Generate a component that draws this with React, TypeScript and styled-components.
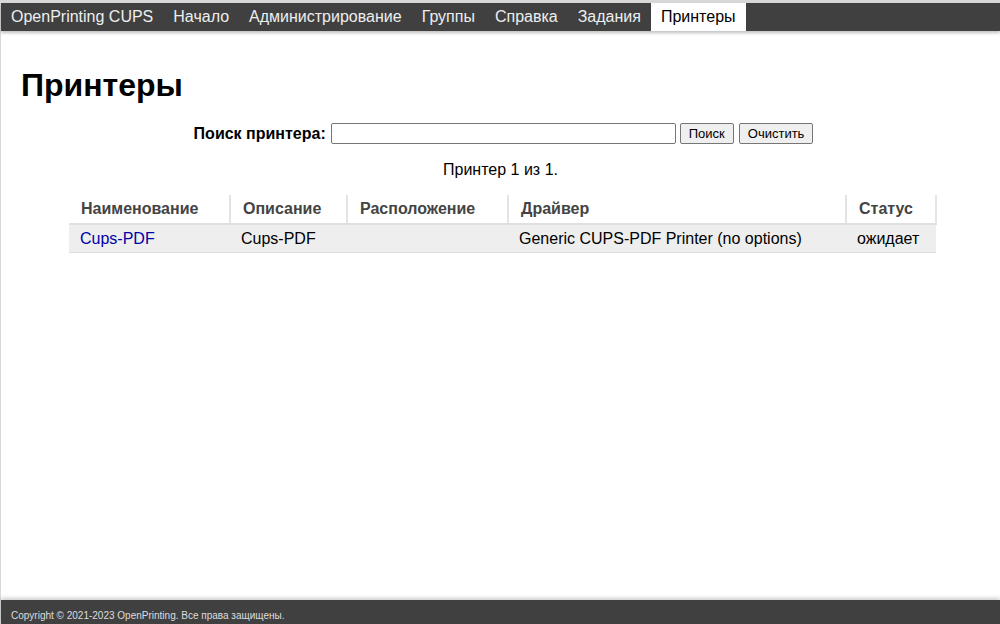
import styled, { createGlobalStyle } from "styled-components";

const GlobalStyle = createGlobalStyle`
  html, body {
    margin: 0;
    padding: 0;
    background: #d8d8d8;
  }
  body {
    font-family: "Liberation Sans", Arial, sans-serif;
    font-size: 16px;
    color: #000;
  }
`;

const Page = styled.div`
  display: flex;
  flex-direction: column;
  min-height: 621px;
  margin-top: 3px;
  margin-left: 1px;
  background: #fff;
`;

const Header = styled.nav`
  display: flex;
  height: 28px;
  background: #404040;
  box-shadow: 0 2px 3px rgba(0, 0, 0, 0.25);
`;

const NavItem = styled.a<{ $active?: boolean }>`
  display: flex;
  align-items: center;
  padding: 0 10px;
  font-size: 16px;
  text-decoration: none;
  color: ${(p) => (p.$active ? "#000" : "#eee")};
  background: ${(p) => (p.$active ? "#fff" : "transparent")};
`;

const Main = styled.main`
  flex: 1;
  padding: 0 20px;
`;

const Title = styled.h1`
  margin: 36px 0 20px;
  font-size: 32px;
  line-height: 36px;
  font-weight: bold;
`;

const SearchForm = styled.form`
  display: flex;
  justify-content: center;
  align-items: center;
  gap: 4px;
  margin-left: 6px;
`;

const SearchLabel = styled.label`
  font-size: 16px;
  font-weight: bold;
  margin-right: 1px;
`;

const SearchInput = styled.input`
  box-sizing: border-box;
  width: 345px;
  height: 21px;
  padding: 1px;
  border: 1px solid #767676;
  border-radius: 2px;
`;

const Button = styled.button`
  height: 21px;
  padding: 0 8px;
  font-family: "Liberation Sans", Arial, sans-serif;
  font-size: 13px;
  background: #efefef;
  border: 1px solid #767676;
  border-radius: 2px;
  color: #000;
  & + & {
    margin-left: 1px;
  }
`;

const Count = styled.p`
  margin: 17px 0 16px;
  text-align: center;
  font-size: 16px;
`;

const Table = styled.table`
  margin-left: 48px;
  width: 867px;
  border-collapse: collapse;
  table-layout: fixed;
`;

const Th = styled.th`
  height: 28px;
  padding: 0 12px;
  text-align: left;
  font-size: 16px;
  font-weight: bold;
  color: #444;
  border-right: 2px solid #e4e4e4;
  border-bottom: 2px solid #e0e0e0;
`;

const Row = styled.tr`
  background: #eee;
`;

const Td = styled.td`
  height: 27px;
  padding: 0 11px;
  font-size: 16px;
  border-bottom: 1px solid #ddd;
`;

const Link = styled.a`
  color: #0000aa;
  text-decoration: none;
`;

const Footer = styled.footer`
  height: 24px;
  display: flex;
  align-items: flex-end;
  padding: 0 10px 3px;
  box-sizing: border-box;
  background: #404040;
  color: #ddd;
  font-size: 10px;
  box-shadow: 0 -2px 4px rgba(0, 0, 0, 0.2);
`;

const navItems = [
  "OpenPrinting CUPS",
  "Начало",
  "Администрирование",
  "Группы",
  "Справка",
  "Задания",
  "Принтеры",
];

const columns = [
  { title: "Наименование", width: 161 },
  { title: "Описание", width: 117 },
  { title: "Расположение", width: 161 },
  { title: "Драйвер", width: 338 },
  { title: "Статус", width: 90 },
];

export default function App() {
  return (
    <>
      <GlobalStyle />
      <Page>
        <Header>
          {navItems.map((item) => (
            <NavItem key={item} href="#" $active={item === "Принтеры"}>
              {item}
            </NavItem>
          ))}
        </Header>
        <Main>
          <Title>Принтеры</Title>
          <SearchForm onSubmit={(e) => e.preventDefault()}>
            <SearchLabel>Поиск принтера:</SearchLabel>
            <SearchInput type="search" />
            <Button type="submit">Поиск</Button>
            <Button type="button">Очистить</Button>
          </SearchForm>
          <Count>Принтер 1 из 1.</Count>
          <Table>
            <colgroup>
              {columns.map((c) => (
                <col key={c.title} style={{ width: c.width }} />
              ))}
            </colgroup>
            <thead>
              <tr>
                {columns.map((c) => (
                  <Th key={c.title}>{c.title}</Th>
                ))}
              </tr>
            </thead>
            <tbody>
              <Row>
                <Td>
                  <Link href="#">Cups-PDF</Link>
                </Td>
                <Td>Cups-PDF</Td>
                <Td></Td>
                <Td>Generic CUPS-PDF Printer (no options)</Td>
                <Td>ожидает</Td>
              </Row>
            </tbody>
          </Table>
        </Main>
        <Footer>Copyright © 2021-2023 OpenPrinting. Все права защищены.</Footer>
      </Page>
    </>
  );
}
